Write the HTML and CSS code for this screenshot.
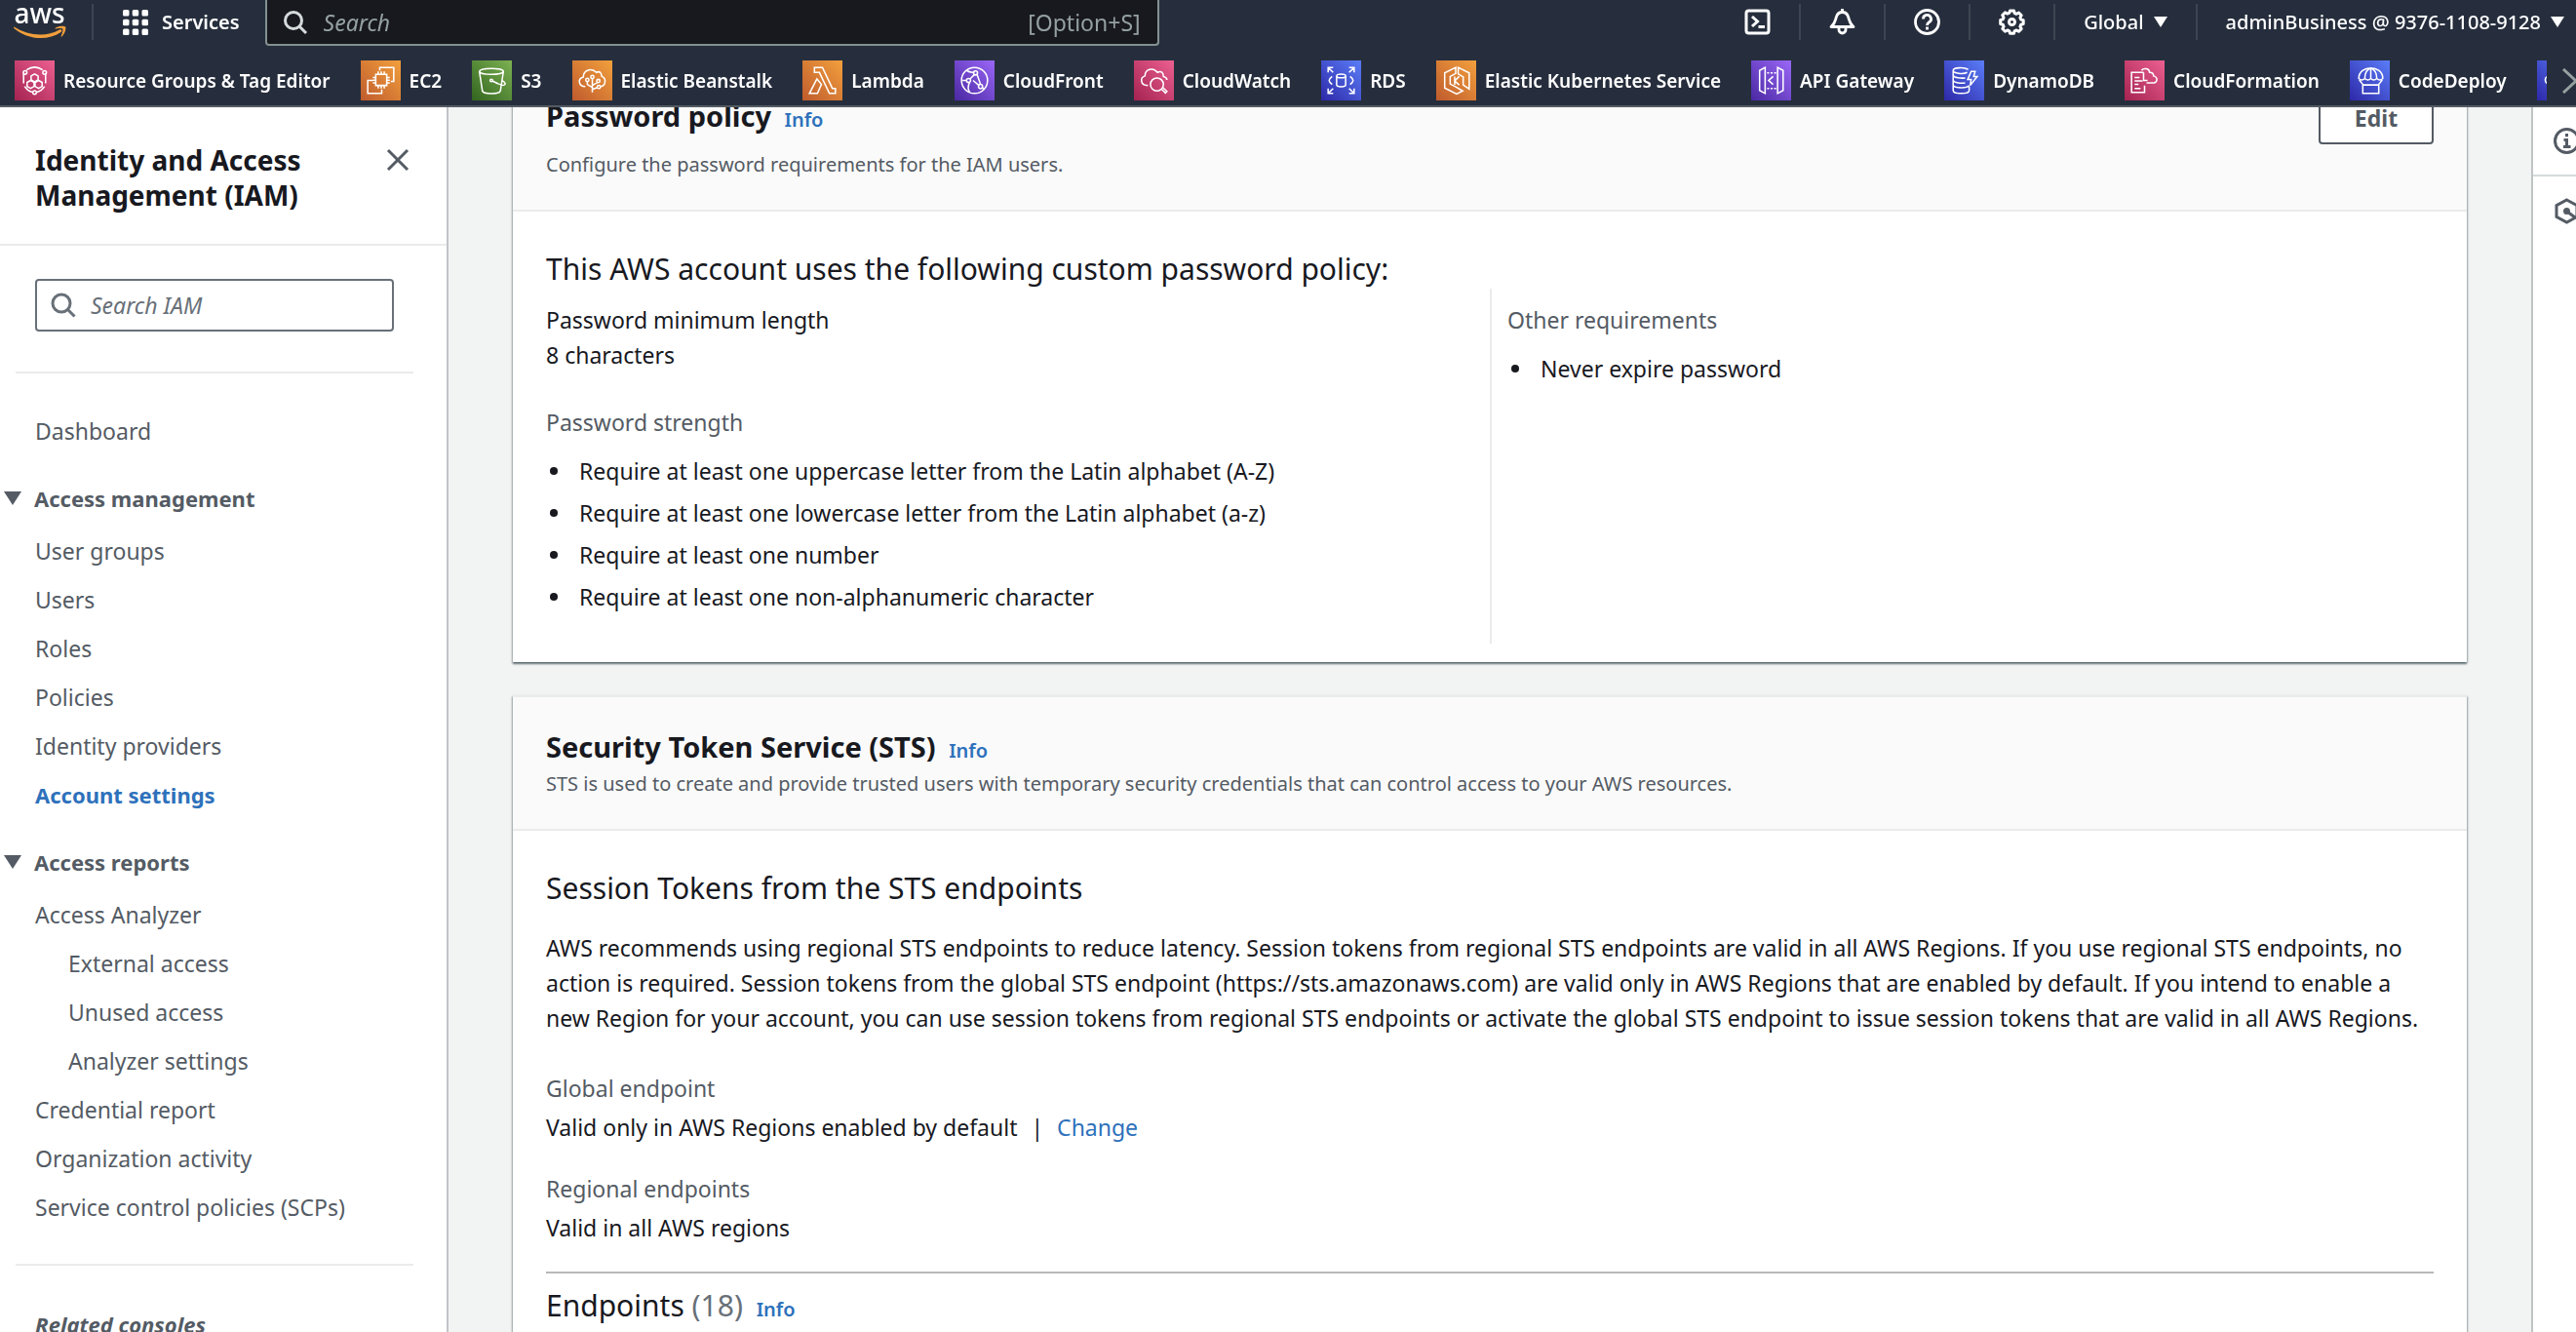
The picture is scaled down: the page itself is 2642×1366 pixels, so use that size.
FILE: index.html
```html
<!DOCTYPE html>
<html lang="en">
<head>
<meta charset="utf-8">
<title>Account settings | IAM | Global</title>
<meta name="viewport" content="width=device-width, initial-scale=1">
<link rel="stylesheet" href="styles.css">
</head>
<body>
<svg class="defs" width="0" height="0" aria-hidden="true">
  <defs>
    <linearGradient id="g-pink" x1="0" y1="1" x2="1" y2="0"><stop offset="0" stop-color="#a42351"/><stop offset="1" stop-color="#ec6090"/></linearGradient>
    <linearGradient id="g-orange" x1="0" y1="1" x2="1" y2="0"><stop offset="0" stop-color="#bf5b2d"/><stop offset="1" stop-color="#f2a03d"/></linearGradient>
    <linearGradient id="g-green" x1="0" y1="1" x2="1" y2="0"><stop offset="0" stop-color="#32651f"/><stop offset="1" stop-color="#7db152"/></linearGradient>
    <linearGradient id="g-purple" x1="0" y1="1" x2="1" y2="0"><stop offset="0" stop-color="#4a28a2"/><stop offset="1" stop-color="#9a67f7"/></linearGradient>
    <linearGradient id="g-blue" x1="0" y1="1" x2="1" y2="0"><stop offset="0" stop-color="#2d28a8"/><stop offset="1" stop-color="#5b7df8"/></linearGradient>
  </defs>
</svg>

<header class="header">
  <div class="topbar">
    <a class="logo" href="#" aria-label="AWS home">
      <span class="logo-word">aws</span>
      <svg class="logo-smile" viewBox="0 0 54 14" aria-hidden="true"><path d="M0.500 1.500C15 11 34 12 47 4.500C49 3.500 50.500 5.500 48.500 7C34 17 13 14 0.300 3Q-.3 1.500.5 1.500Z"/><path d="M43 2.500C46 .5 52 .2 53.200 1.500C54 3 52.500 9 49.300 11.500C48.700 12 48.300 11.600 48.600 11C49.700 8.300 51 4.700 50.200 3.700C49.500 2.700 46 3.100 43.800 3.400C42.900 3.500 42.500 3 43 2.500Z"/></svg>
    </a>
    <button class="services" type="button">
      <svg class="icon-26" viewBox="0 0 26 26" fill="currentColor" aria-hidden="true"><rect width="6.500" height="6.500" rx="1.500"/><rect x="9.700" width="6.500" height="6.500" rx="1.500"/><rect x="19.500" width="6.500" height="6.500" rx="1.500"/><rect y="9.700" width="6.500" height="6.500" rx="1.500"/><rect x="9.700" y="9.700" width="6.500" height="6.500" rx="1.500"/><rect x="19.500" y="9.700" width="6.500" height="6.500" rx="1.500"/><rect y="19.500" width="6.500" height="6.500" rx="1.500"/><rect x="9.700" y="19.500" width="6.500" height="6.500" rx="1.500"/><rect x="19.500" y="19.500" width="6.500" height="6.500" rx="1.500"/></svg>
      Services
    </button>
    <label class="global-search">
      <svg class="icon-26" viewBox="0 0 26 26" fill="none" stroke="currentColor" stroke-width="3" aria-hidden="true"><circle cx="11" cy="11" r="8.500"/><path d="M17 17l7 7"/></svg>
      <input type="text" placeholder="Search" aria-label="Search">
      <span class="shortcut">[Option+S]</span>
    </label>
    <div class="utilities">
      <button class="utility" type="button" aria-label="CloudShell">
        <svg class="icon-27" viewBox="0 0 27 27" fill="none" stroke="currentColor" stroke-width="3" aria-hidden="true"><rect x="2" y="2" width="23" height="23" rx="2.500"/><path d="M8 8l5.500 5L8 18M14.500 18.500h6.500"/></svg>
      </button>
      <button class="utility" type="button" aria-label="Notifications">
        <svg class="icon-27" viewBox="0 0 27 27" fill="none" stroke="currentColor" stroke-width="2.800" stroke-linejoin="round" aria-hidden="true"><path d="M2 18.500C7 14 6 12 7.500 8C8.500 5 11 3.500 13.500 3.500S18.500 5 19.500 8C21 12 20 14 25 18.500Z"/><path d="M13.500 0v4M10 19v2.500a3.500 3.500 0 0 0 7 0V19"/></svg>
      </button>
      <button class="utility" type="button" aria-label="Help">
        <svg class="icon-27" viewBox="0 0 27 27" fill="none" stroke="currentColor" stroke-width="2.800" aria-hidden="true"><circle cx="13.500" cy="13.500" r="12"/><path d="M9.500 10.500a4 4 0 1 1 6 3.300c-1.500.9-2 1.500-2 3.200M13.500 18.500v3"/></svg>
      </button>
      <button class="utility" type="button" aria-label="Settings">
        <svg class="icon-27" viewBox="0 0 27 27" fill="none" stroke="currentColor" stroke-width="3" stroke-linejoin="round" aria-hidden="true"><path d="M11.500 2h4l.7 2.500 2 .8 2.300-1.300 2.700 2.800-1.300 2.200.9 2.100 2.400.6v3.900l-2.500.7-.8 2 1.300 2.300-2.800 2.700-2.200-1.300-2.100.9-.6 2.400h-4l-.6-2.500-2-.8L6.500 23.300 3.800 20.500l1.300-2.200-.9-2.100L1.700 15.500v-4l2.500-.6.8-2L3.700 6.600 6.500 3.800 8.700 5.100l2.200-.9Z"/><circle cx="13.500" cy="13.500" r="3"/></svg>
      </button>
      <button class="utility" type="button">Global <span class="caret"></span></button>
      <button class="utility utility-account" type="button">adminBusiness @ 9376-1108-9128 <span class="caret"></span></button>
    </div>
  </div>
  <nav class="favorites" aria-label="Favorite services">
    <div class="favorites-list">
      <a class="favorite" href="#"><svg class="service-icon" viewBox="0 0 40 40" aria-hidden="true"><rect width="40" height="40" fill="url(#g-pink)"/><path d="M12 9.500C17 6 23 6 28 9.500M31 13v10M9 13v10M10 26c2 3 5 5 7.500 5.800M30 26c-2 3-5 5-7.500 5.800M20 13.500l3.500 2v4L20 21.500l-3.500-2v-4ZM16 20l3.500 2v4L16 28l-3.500-2v-4ZM24 20l3.500 2v4L24 28l-3.500-2v-4Z"/><circle cx="10.500" cy="12" r="1.800"/><circle cx="30" cy="12" r="1.800"/><circle cx="20" cy="32" r="1.800"/></svg>Resource Groups &amp; Tag Editor</a>
      <a class="favorite" href="#"><svg class="service-icon" viewBox="0 0 40 40" aria-hidden="true"><rect width="40" height="40" fill="url(#g-orange)"/><path d="M15 14h11v11H15ZM17.500 14v-3M20.500 14v-3M23.500 14v-3M17.500 28v-3M20.500 28v-3M23.500 28v-3M15 17h-3M15 19.800h-3M15 22.500h-3M29 17h-3M29 19.800h-3M29 22.500h-3M19 10V7h14v14h-3M12 20H7v13h14v-4"/></svg>EC2</a>
      <a class="favorite" href="#"><svg class="service-icon" viewBox="0 0 40 40" aria-hidden="true"><rect width="40" height="40" fill="url(#g-green)"/><ellipse cx="19.500" cy="11" rx="12" ry="3"/><path d="M7.500 11l3 19.500c1 3.500 17 3.500 18 0L31.500 11M20.500 20.500C27 24 32 25.500 33 24S31 20 29.500 20"/><circle cx="19.500" cy="20" r="1.300"/></svg>S3</a>
      <a class="favorite" href="#"><svg class="service-icon" viewBox="0 0 40 40" aria-hidden="true"><rect width="40" height="40" fill="url(#g-orange)"/><path d="M13 26c-7 0-8-8-2-9.500C11 10 19 6.500 24 12c4-2 5 1 5.500 4 5 2 4 10-2 10M20 32V18M20 27l-5-3v-3M20 25l5-3M20 29l5-2"/><circle cx="20" cy="16.500" r="1.600"/><circle cx="15" cy="19.500" r="1.600"/><circle cx="26" cy="20.500" r="1.600"/><circle cx="26.500" cy="26.500" r="1.600"/></svg>Elastic Beanstalk</a>
      <a class="favorite" href="#"><svg class="service-icon" viewBox="0 0 40 40" aria-hidden="true"><rect width="40" height="40" fill="url(#g-orange)"/><path d="M12 7h8l10 21h3v5h-6L17 12h-5ZM14.500 18.500L7 33h8l4-9Z"/></svg>Lambda</a>
      <a class="favorite" href="#"><svg class="service-icon" viewBox="0 0 40 40" aria-hidden="true"><rect width="40" height="40" fill="url(#g-purple)"/><circle cx="20" cy="20" r="13"/><path d="M8 20h4M20 14l-4.500 4.500M22.500 14L26 24M15 22c-2 4-1.500 7 0 9.500M18.500 20l6 5M12 10c3 2 5 2.500 8 1.500M28 27l1 2"/><circle cx="21" cy="12.500" r="2"/><circle cx="14" cy="20" r="2"/><circle cx="26" cy="26" r="2"/></svg>CloudFront</a>
      <a class="favorite" href="#"><svg class="service-icon" viewBox="0 0 40 40" aria-hidden="true"><rect width="40" height="40" fill="url(#g-pink)"/><path d="M14 25c-8 0-8-8-3-9.500C11 9 19 6 23.500 12c4-2 6 0 6 4 2 .5 3.500 2 3.500 3.500M29 27l4 4-1.500 1.500-4-4"/><circle cx="23" cy="24" r="6.500"/></svg>CloudWatch</a>
      <a class="favorite" href="#"><svg class="service-icon" viewBox="0 0 40 40" aria-hidden="true"><rect width="40" height="40" fill="url(#g-blue)"/><ellipse cx="20" cy="15.500" rx="4.500" ry="1.800"/><path d="M15.500 15.500v9c0 2.500 9 2.500 9 0v-9M7 12V7h5M7 7l5 5M28 7h5v5M33 7l-5 5M7 28v5h5M7 33l5-5M28 33h5v-5M33 33l-5-5M11 16c-4 3-4 5 0 8M29 16c4 3 4 5 0 8"/></svg>RDS</a>
      <a class="favorite" href="#"><svg class="service-icon" viewBox="0 0 40 40" aria-hidden="true"><rect width="40" height="40" fill="url(#g-orange)"/><path d="M19.500 7L8.500 12.500v15L20.500 33.500l6-3-6-3.500-6.500-3.500V16l5.500-3ZM22 7l11 5.500v16L27 24.500v-8L22 13.500ZM18.500 16v8.500M23 16l-4.500 4.500 4.500 4"/></svg>Elastic Kubernetes Service</a>
      <a class="favorite" href="#"><svg class="service-icon" viewBox="0 0 40 40" aria-hidden="true"><rect width="40" height="40" fill="url(#g-purple)"/><path d="M14 7L8.500 10v20L14 33ZM26.500 7l5.500 3v20l-5.500 3ZM22 16l-4.500 4 4.500 4"/><path d="M16 12.500h9M16 28h9" stroke-dasharray="2 1.500"/></svg>API Gateway</a>
      <a class="favorite" href="#"><svg class="service-icon" viewBox="0 0 40 40" aria-hidden="true"><rect width="40" height="40" fill="url(#g-blue)"/><path d="M24 9C20 6.500 9 7 9 10s10 4 14 2M9 10v20c0 4 16 4 16 0v-4M9 15c1 2.500 8 3 12 2.500M9 20c1 2.500 8 3 12 2.500M9 25c2 3 14 3 16 0M27 11h4l-1.500 5H33l-7 9 1-6h-3.500Z"/></svg>DynamoDB</a>
      <a class="favorite" href="#"><svg class="service-icon" viewBox="0 0 40 40" aria-hidden="true"><rect width="40" height="40" fill="url(#g-pink)"/><path d="M19 12H7v20h13V25M19 12v8h4M10 17h5M10 20.500h8M10 24h4M10 28h6M17 10c2-3 8-2 8 2 3 0 4 1 4 3.500 5 1.500 4 7-1 7h-6"/></svg>CloudFormation</a>
      <a class="favorite" href="#"><svg class="service-icon" viewBox="0 0 40 40" aria-hidden="true"><rect width="40" height="40" fill="url(#g-blue)"/><path d="M9 18C9 4 33 4 33 18q-3 3-6 0-3 3-6 0-3 3-6 0-3 3-6 0ZM15 18c0-5 2-9 6-10.500C25 9 27 13 27 18M21 7.500V18M9.500 19.500l4 5M32.500 19.500l-4 5M13 24.500h16V33H13Z"/></svg>CodeDeploy</a>
      <a class="favorite" href="#" aria-label="CodeCommit"><svg class="service-icon" viewBox="0 0 40 40" aria-hidden="true"><rect width="40" height="40" fill="url(#g-blue)"/><path d="M14 24c-7 0-7-7-3-8C12 9 19 6 24 12"/></svg></a>
    </div>
    <button class="favorites-next" type="button" aria-label="Scroll right"><svg viewBox="0 0 18 26" fill="none" stroke="currentColor" stroke-width="3" aria-hidden="true"><path d="M2 1l13 12L2 25"/></svg></button>
  </nav>
</header>

<div class="shell">
  <aside class="sidebar">
    <div class="sidebar-head">
      <h2 class="sidebar-title">Identity and Access Management (IAM)</h2>
      <button class="close" type="button" aria-label="Close navigation"><svg viewBox="0 0 24 24" fill="none" stroke="currentColor" stroke-width="3" aria-hidden="true"><path d="M2 2l20 20M22 2L2 22"/></svg></button>
    </div>
    <label class="iam-search">
      <svg class="icon-26" viewBox="0 0 26 26" fill="none" stroke="currentColor" stroke-width="3" aria-hidden="true"><circle cx="11" cy="11" r="9"/><path d="M17.500 17.500l7 7"/></svg>
      <input type="text" placeholder="Search IAM" aria-label="Search IAM">
    </label>
    <hr class="rule">
    <nav class="nav" aria-label="IAM">
      <a class="nav-link" href="#">Dashboard</a>
      <section class="nav-group">
        <button class="nav-heading" type="button" aria-expanded="true"><span class="nav-caret"></span>Access management</button>
        <ul class="nav-list">
          <li><a class="nav-link" href="#">User groups</a></li>
          <li><a class="nav-link" href="#">Users</a></li>
          <li><a class="nav-link" href="#">Roles</a></li>
          <li><a class="nav-link" href="#">Policies</a></li>
          <li><a class="nav-link" href="#">Identity providers</a></li>
          <li><a class="nav-link nav-current" href="#" aria-current="page">Account settings</a></li>
        </ul>
      </section>
      <section class="nav-group">
        <button class="nav-heading" type="button" aria-expanded="true"><span class="nav-caret"></span>Access reports</button>
        <ul class="nav-list">
          <li><a class="nav-link" href="#">Access Analyzer</a></li>
          <li class="nav-nested"><a class="nav-link" href="#">External access</a></li>
          <li class="nav-nested"><a class="nav-link" href="#">Unused access</a></li>
          <li class="nav-nested"><a class="nav-link" href="#">Analyzer settings</a></li>
          <li><a class="nav-link" href="#">Credential report</a></li>
          <li><a class="nav-link" href="#">Organization activity</a></li>
          <li><a class="nav-link" href="#">Service control policies (SCPs)</a></li>
        </ul>
      </section>
    </nav>
    <hr class="rule">
    <p class="related">Related consoles</p>
  </aside>

  <main class="content">
    <section class="card">
      <header class="card-head card-head-actions">
        <div class="card-title-row">
          <h2 class="card-title">Password policy <a class="info" href="#">Info</a></h2>
          <button class="edit" type="button">Edit</button>
        </div>
        <p class="card-desc card-desc-spaced">Configure the password requirements for the IAM users.</p>
      </header>
      <div class="card-body">
        <h3 class="subtitle">This AWS account uses the following custom password policy:</h3>
        <div class="columns">
          <div class="column">
            <p>Password minimum length</p>
            <p>8 characters</p>
            <p class="field-label section-gap">Password strength</p>
            <ul class="bullets">
              <li>Require at least one uppercase letter from the Latin alphabet (A-Z)</li>
              <li>Require at least one lowercase letter from the Latin alphabet (a-z)</li>
              <li>Require at least one number</li>
              <li>Require at least one non-alphanumeric character</li>
            </ul>
          </div>
          <div class="column column-divided">
            <p class="field-label">Other requirements</p>
            <ul class="bullets">
              <li>Never expire password</li>
            </ul>
          </div>
        </div>
      </div>
    </section>

    <section class="card">
      <header class="card-head">
        <h2 class="card-title">Security Token Service (STS) <a class="info" href="#">Info</a></h2>
        <p class="card-desc">STS is used to create and provide trusted users with temporary security credentials that can control access to your AWS resources.</p>
      </header>
      <div class="card-body">
        <h3 class="subtitle">Session Tokens from the STS endpoints</h3>
        <p class="intro">AWS recommends using regional STS endpoints to reduce latency. Session tokens from regional STS endpoints are valid in all AWS Regions. If you use regional STS endpoints, no action is required. Session tokens from the global STS endpoint (https://sts.amazonaws.com) are valid only in AWS Regions that are enabled by default. If you intend to enable a new Region for your account, you can use session tokens from regional STS endpoints or activate the global STS endpoint to issue session tokens that are valid in all AWS Regions.</p>
        <dl class="fields">
          <div class="field">
            <dt class="field-label">Global endpoint</dt>
            <dd class="field-value">Valid only in AWS Regions enabled by default <span class="pipe">|</span> <a class="link" href="#">Change</a></dd>
          </div>
          <div class="field">
            <dt class="field-label">Regional endpoints</dt>
            <dd class="field-value">Valid in all AWS regions</dd>
          </div>
        </dl>
        <div class="endpoints">
          <h3 class="subtitle">Endpoints <span class="count">(18)</span> <a class="info" href="#">Info</a></h3>
          <p class="card-desc">You can enable or disable STS endpoints for each of the Regions in which your account is active.</p>
        </div>
      </div>
    </section>
  </main>

  <aside class="tools" aria-label="Tools">
    <button class="tool" type="button" aria-label="Info panel"><svg class="icon-27" viewBox="0 0 27 27" fill="none" stroke="currentColor" stroke-width="3" aria-hidden="true"><circle cx="13.500" cy="13.500" r="12"/><path d="M13.500 6v3.200M10.500 12.500h3V19M10 19.500h7.500"/></svg></button>
    <button class="tool" type="button" aria-label="Diagnostics"><svg class="icon-27" viewBox="0 0 27 27" fill="none" stroke="currentColor" stroke-width="3" aria-hidden="true"><path d="M13.500 2L24 7.700v11.600L13.500 25 3 19.300V7.700ZM14 14l8 6"/><circle cx="13.500" cy="13.500" r="2" fill="currentColor"/></svg></button>
  </aside>
</div>
</body>
</html>
```
FILE: styles.css
```css
:root {
  --navy: #262e3d;
  --ink: #18191f;
  --slate: #545b64;
  --muted: #687078;
  --line: #eaebeb;
  --link: #2e71bb;
  --page: #f2f3f3;
}

* { box-sizing: border-box; }

body {
  margin: 0;
  font: 23px/36px "Noto Sans", "Open Sans", sans-serif;
  color: var(--ink);
  background: var(--page);
}

h2, h3, p, ul, dl, dd { margin: 0; padding: 0; }
ul { list-style: none; }
a { color: inherit; text-decoration: none; }
button {
  border: 0;
  padding: 0;
  background: none;
  font: inherit;
  color: inherit;
  cursor: pointer;
}
svg { display: block; flex: none; }
.defs { position: absolute; }
.icon-26 { width: 26px; height: 26px; }
.icon-27 { width: 27px; height: 27px; }

/* Header */
.header {
  position: fixed;
  inset: 0 0 auto;
  z-index: 10;
  background: var(--navy);
  border-bottom: 2px solid var(--slate);
  color: #fff;
  font-size: 20px;
  line-height: 28px;
  font-weight: 500;
}
.topbar { display: flex; height: 47px; }
.logo {
  display: flex;
  flex-direction: column;
  align-items: center;
  width: 81px;
  line-height: 26px;
}
.logo-word { font-size: 28px; }
.logo-smile { width: 54px; height: 14px; fill: #f09e3b; }
.services {
  display: flex;
  align-items: center;
  gap: 14px;
  height: 37px;
  margin: 4px 26px 0 13px;
  padding-left: 30px;
  border-left: 2px solid #3d4552;
  font-weight: 600;
}
.global-search {
  display: flex;
  align-items: center;
  gap: 16px;
  width: 917px;
  padding: 0 17px 0 16px;
  border: 2px solid #839191;
  border-top: 0;
  border-radius: 0 0 4px 4px;
  background: var(--ink);
  color: #d5dbdb;
  font-size: 23px;
  font-weight: 400;
}
input {
  flex: 1;
  min-width: 0;
  border: 0;
  padding: 0;
  outline: 0;
  background: none;
  font: inherit;
  color: inherit;
}
input::placeholder { color: var(--muted); font-style: italic; opacity: 1; }
.global-search input::placeholder { color: #95a1a1; }
.shortcut { color: #95a1a1; }
.utilities { display: flex; height: 37px; margin: 4px 0 0 auto; }
.utility {
  display: flex;
  align-items: center;
  gap: 10px;
  padding: 0 29px;
  font-weight: 500;
}
.utility + .utility { border-left: 2px solid #3d4552; }
.utility-account { padding-right: 12px; }
.caret {
  border: 7px solid transparent;
  border-top: 11px solid #fff;
  border-bottom: 0;
}
.favorites {
  display: flex;
  align-items: center;
  padding: 15px 0 5px 15px;
}
.favorites-list {
  display: flex;
  flex: 1;
  min-width: 0;
  gap: 31px;
  overflow: hidden;
}
.favorite {
  display: flex;
  flex: none;
  align-items: center;
  gap: 9px;
  font-size: 19px;
  font-weight: 600;
}
.service-icon {
  width: 41px;
  height: 41px;
  fill: none;
  stroke: #fff;
  stroke-width: 1.5;
}
.service-icon rect { stroke: none; }
.favorites-next {
  flex: none;
  width: 30px;
  padding-left: 15px;
  overflow: hidden;
  color: #95a1a1;
}
.favorites-next svg { width: 18px; height: 26px; }

/* Page frame */
.shell { display: flex; height: 100vh; overflow: hidden; }

/* Sidebar */
.sidebar {
  flex: 0 0 460px;
  padding-top: 110px;
  overflow: hidden;
  background: #fff;
  border-right: 2px solid #c0c4c8;
  color: var(--slate);
}
.sidebar-head {
  display: flex;
  align-items: flex-start;
  justify-content: space-between;
  padding: 36px 38px 32px 36px;
  border-bottom: 2px solid var(--line);
}
.sidebar-title {
  width: 300px;
  font-size: 28px;
  line-height: 36px;
  color: var(--ink);
}
.close { padding-top: 6px; }
.close svg { width: 24px; height: 24px; }
.iam-search {
  display: flex;
  align-items: center;
  gap: 15px;
  height: 54px;
  margin: 34px 54px 41px 36px;
  padding: 0 14px;
  border: 2px solid var(--muted);
  border-radius: 4px;
  color: var(--muted);
}
.rule {
  height: 2px;
  margin: 0 34px 0 16px;
  border: 0;
  background: var(--line);
}
.nav { padding: 41px 36px 40px; }
.nav-link { display: block; }
.nav-group { margin-top: 33px; }
.nav-heading {
  display: flex;
  align-items: center;
  gap: 13px;
  margin-left: -32px;
  font-size: 22px;
  font-weight: 700;
}
.nav-caret {
  border: 9px solid transparent;
  border-top: 14px solid var(--slate);
  border-bottom: 0;
}
.nav-list {
  display: flex;
  flex-direction: column;
  gap: 14px;
  margin-top: 18px;
}
.nav-nested { padding-left: 34px; }
.nav-current { color: var(--link); font-size: 22px; font-weight: 700; }
.related {
  padding: 42px 36px;
  font-size: 22px;
  font-style: italic;
  font-weight: 700;
}

/* Content */
.content {
  flex: 1;
  min-width: 0;
  display: flex;
  flex-direction: column;
  gap: 34px;
  padding: 66px 66px 0;
}
.card {
  flex: none;
  background: #fff;
  border-top: 2px solid var(--line);
  box-shadow: 0 2px 2px rgba(0, 28, 36, .5), 1px 1px 2px rgba(0, 28, 36, .2), -1px 1px 2px rgba(0, 28, 36, .2);
}
.card-head {
  padding: 31px 34px 32px;
  background: #fafafa;
  border-bottom: 2px solid var(--line);
}
.card-head-actions { padding-top: 26px; }
.card-title-row {
  display: flex;
  align-items: center;
  justify-content: space-between;
}
.card-title { font-size: 29px; line-height: 40px; }
.info {
  margin-left: 6px;
  color: var(--link);
  font-size: 20px;
  font-weight: 600;
}
.edit {
  width: 118px;
  height: 54px;
  border: 2px solid var(--slate);
  border-radius: 4px;
  background: #fff;
  color: var(--slate);
  font-weight: 700;
}
.card-desc { font-size: 20px; line-height: 28px; color: var(--slate); }
.card-desc-spaced { margin-top: 7px; }
.card-body { padding: 39px 34px 19px; }
.subtitle { font-size: 30px; line-height: 40px; font-weight: 400; }
.columns { display: grid; grid-template-columns: 1fr 1fr; }
.column { padding: 14px 0 30px; }
.column-divided { padding-left: 16px; border-left: 2px solid var(--line); }
.field-label { color: var(--slate); }
.section-gap { margin-top: 33px; }
.bullets {
  display: flex;
  flex-direction: column;
  gap: 7px;
  margin-top: 14px;
}
.bullets li {
  display: flex;
  align-items: center;
  gap: 22px;
  padding-left: 4px;
}
.bullets li::before {
  content: "";
  flex: none;
  width: 8px;
  height: 8px;
  border-radius: 50%;
  background: currentColor;
}
.intro { margin-top: 23px; }
.fields {
  display: flex;
  flex-direction: column;
  gap: 27px;
  margin-top: 36px;
}
.field-value { margin-top: 4px; }
.pipe { margin: 0 8px; }
.link { color: var(--link); }
.endpoints {
  margin-top: 27px;
  padding-top: 13px;
  border-top: 2px solid #b8b8b8;
}
.count { color: var(--muted); }

/* Tool rail: the panel continues past the window edge */
.tools {
  flex: 0 0 46px;
  padding-top: 110px;
  overflow: hidden;
  background: #fff;
  border-left: 2px solid #c0c4c4;
  color: var(--slate);
}
.tool {
  display: flex;
  align-items: center;
  justify-content: center;
  width: 68px;
  height: 71px;
}
.tool:first-child { border-bottom: 2px solid #d5dbdb; }
```
